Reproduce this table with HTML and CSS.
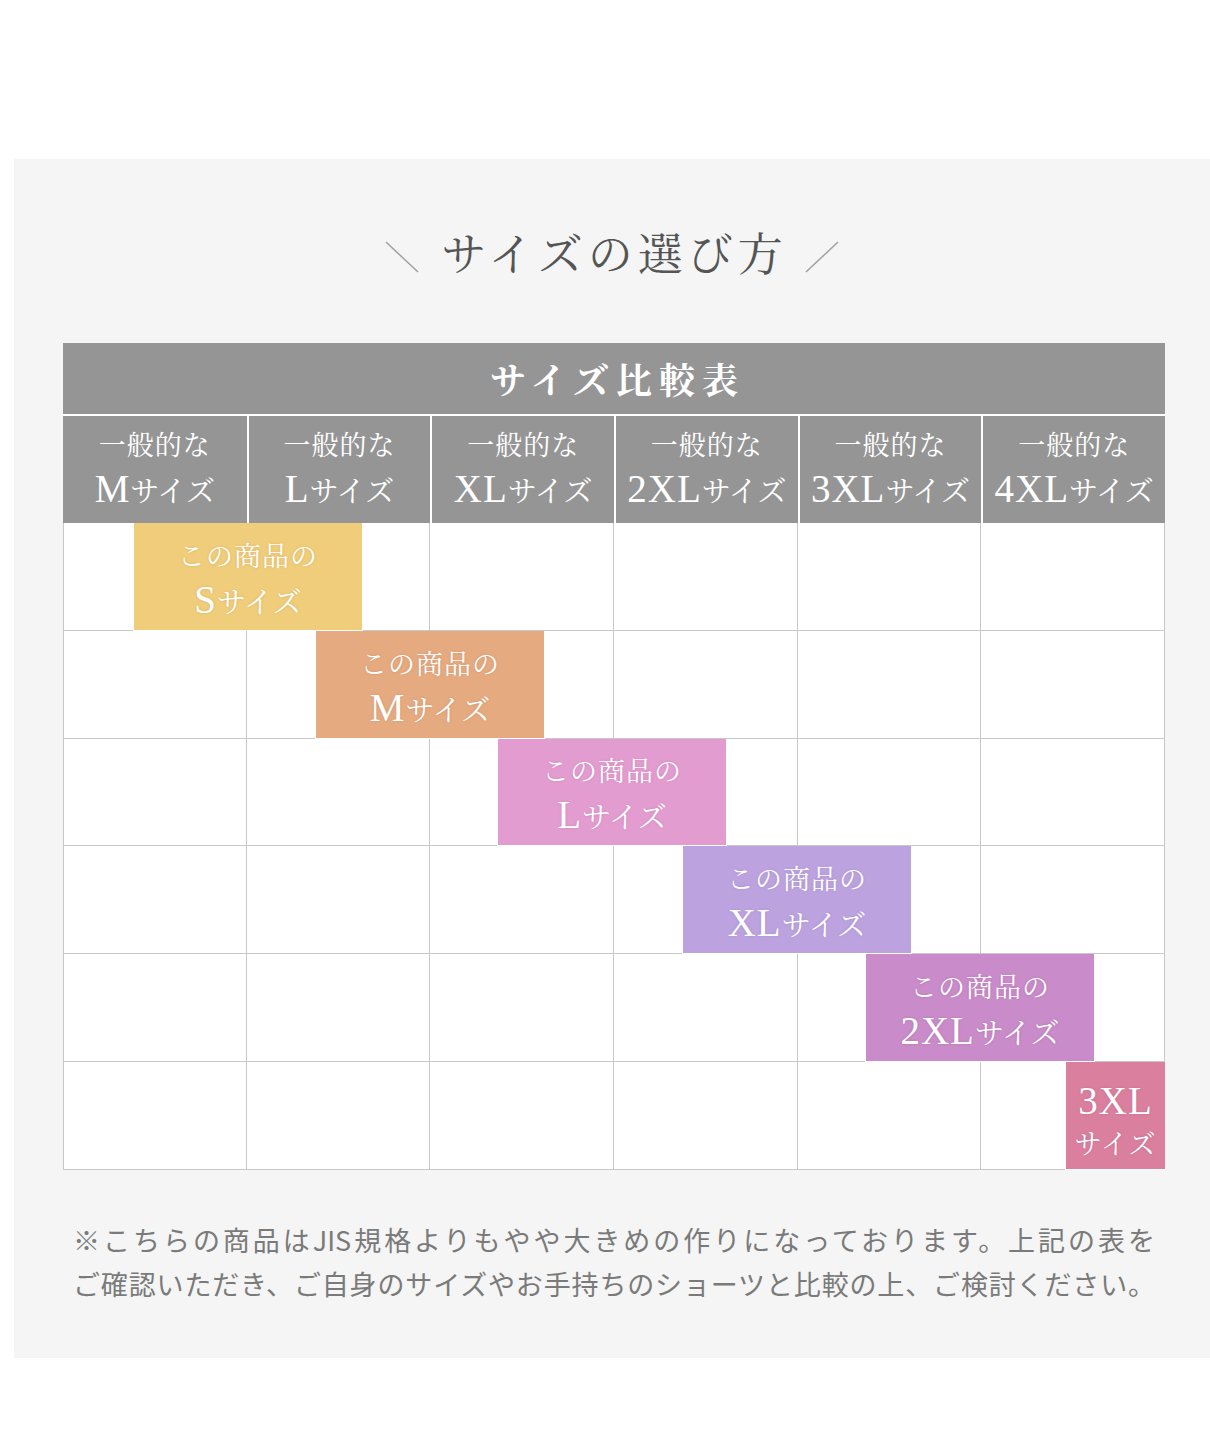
FILE: index.html
```html
<!DOCTYPE html>
<html lang="ja">
<head>
<meta charset="utf-8">
<title>サイズの選び方</title>
<link rel="stylesheet" href="styles.css">
</head>
<body>
<div class="page">
  <section class="panel">
    <h2 class="title">
      <svg class="slash" width="34" height="32" viewBox="0 0 34 32"><line x1="1" y1="1" x2="33" y2="31"/></svg>
      <span class="title-text">サイズの選び方</span>
      <svg class="slash" width="34" height="32" viewBox="0 0 34 32"><line x1="1" y1="31" x2="33" y2="1"/></svg>
    </h2>

    <div class="chart">
      <div class="chart-head">サイズ比較表</div>
      <div class="col-heads">
        <div class="col-head"><span class="l1">一般的な</span><span class="l2"><span class="lat">M</span>サイズ</span></div>
        <div class="col-head"><span class="l1">一般的な</span><span class="l2"><span class="lat">L</span>サイズ</span></div>
        <div class="col-head"><span class="l1">一般的な</span><span class="l2"><span class="lat">XL</span>サイズ</span></div>
        <div class="col-head"><span class="l1">一般的な</span><span class="l2"><span class="lat">2XL</span>サイズ</span></div>
        <div class="col-head"><span class="l1">一般的な</span><span class="l2"><span class="lat">3XL</span>サイズ</span></div>
        <div class="col-head"><span class="l1">一般的な</span><span class="l2"><span class="lat">4XL</span>サイズ</span></div>
      </div>

      <div class="row">
        <div class="cell"></div><div class="cell"></div><div class="cell"></div><div class="cell"></div><div class="cell"></div><div class="cell"></div>
        <div class="bar bar-s"><span class="b1">この商品の</span><span class="b2"><span class="lat">S</span>サイズ</span></div>
      </div>
      <div class="row">
        <div class="cell"></div><div class="cell"></div><div class="cell"></div><div class="cell"></div><div class="cell"></div><div class="cell"></div>
        <div class="bar bar-m"><span class="b1">この商品の</span><span class="b2"><span class="lat">M</span>サイズ</span></div>
      </div>
      <div class="row">
        <div class="cell"></div><div class="cell"></div><div class="cell"></div><div class="cell"></div><div class="cell"></div><div class="cell"></div>
        <div class="bar bar-l"><span class="b1">この商品の</span><span class="b2"><span class="lat">L</span>サイズ</span></div>
      </div>
      <div class="row">
        <div class="cell"></div><div class="cell"></div><div class="cell"></div><div class="cell"></div><div class="cell"></div><div class="cell"></div>
        <div class="bar bar-xl"><span class="b1">この商品の</span><span class="b2"><span class="lat">XL</span>サイズ</span></div>
      </div>
      <div class="row">
        <div class="cell"></div><div class="cell"></div><div class="cell"></div><div class="cell"></div><div class="cell"></div><div class="cell"></div>
        <div class="bar bar-2xl"><span class="b1">この商品の</span><span class="b2"><span class="lat">2XL</span>サイズ</span></div>
      </div>
      <div class="row">
        <div class="cell"></div><div class="cell"></div><div class="cell"></div><div class="cell"></div><div class="cell"></div><div class="cell"></div>
        <div class="bar bar-3xl"><span class="b2"><span class="lat">3XL</span></span><span class="b3">サイズ</span></div>
      </div>
    </div>

    <p class="note">
      <span class="note-line">※こちらの商品はJIS規格よりもやや大きめの作りになっております。上記の表を</span>
      <span class="note-line">ご確認いただき、ご自身のサイズやお手持ちのショーツと比較の上、ご検討ください。</span>
    </p>
  </section>
</div>
</body>
</html>
```

FILE: styles.css
```css
html, body {
  margin: 0;
  padding: 0;
  background: #ffffff;
}

.page {
  padding: 159px 0 94px 14px;
}

.panel {
  background: #f4f5f4;
  padding: 67px 0 52px;
  font-family: "Liberation Serif", "Noto Serif CJK JP", "Noto Sans CJK JP", serif;
}

.title {
  margin: 0;
  height: 60px;
  display: flex;
  align-items: center;
  justify-content: center;
  gap: 22px;
  font-weight: 400;
  font-size: 45px;
  color: #555555;
}

.title-text {
  letter-spacing: 5px;
  margin-right: -5px;
  line-height: 60px;
}

.slash {
  margin-top: 2px;
}

.slash line {
  stroke: #a0a0a0;
  stroke-width: 1.5;
}

.chart {
  width: 1102px;
  margin: 57px 0 0 49px;
  background: #ffffff;
}

.chart-head {
  height: 71px;
  background: #959595;
  color: #ffffff;
  font-weight: 700;
  font-size: 36px;
  letter-spacing: 7px;
  text-indent: 7px;
  display: flex;
  align-items: center;
  justify-content: center;
  border-bottom: 2px solid #ffffff;
}

.col-heads {
  display: grid;
  grid-template-columns: repeat(6, 1fr);
  height: 107px;
}

.col-head {
  background: #959595;
  color: #ffffff;
  display: flex;
  flex-direction: column;
  align-items: center;
  justify-content: center;
  border-left: 2px solid #ffffff;
  padding-top: 2px;
  box-sizing: border-box;
}

.col-head:first-child {
  border-left: none;
}

.l1 {
  font-size: 27px;
  letter-spacing: 1px;
  line-height: 40px;
}

.l2 {
  font-size: 29px;
  line-height: 46px;
  white-space: nowrap;
}

.lat {
  font-family: "Liberation Serif", serif;
  font-size: 39px;
  letter-spacing: 1px;
}

.row {
  position: relative;
  display: grid;
  grid-template-columns: repeat(6, 1fr);
  height: 107.8px;
}

.cell {
  border-right: 1px solid #c8c8c8;
  border-bottom: 1px solid #c8c8c8;
}

.cell:first-child {
  border-left: 1px solid #c8c8c8;
}

.bar {
  position: absolute;
  top: 0;
  bottom: 0;
  width: 230px;
  box-sizing: border-box;
  border: 1px solid #ffffff;
  border-top: none;
  display: flex;
  flex-direction: column;
  align-items: center;
  justify-content: center;
  color: #ffffff;
  text-shadow: 0 0 3px rgba(0, 0, 0, 0.12);
  padding-top: 10px;
}

.b1 {
  font-size: 27px;
  letter-spacing: 1px;
  line-height: 40px;
}

.b2 {
  font-size: 29px;
  line-height: 46px;
  white-space: nowrap;
}

.b3 {
  font-size: 27px;
  letter-spacing: 1px;
  line-height: 36px;
}

.bar-s { left: 70px; background: #f0cd7a; }
.bar-m { left: 252px; background: #e6aa80; }
.bar-l { left: 434px; background: #e39cd0; }
.bar-xl { left: 619px; background: #bca3e0; }
.bar-2xl { left: 802px; background: #c98bc9; }
.bar-3xl { left: 1002px; width: 100px; background: #db7f9f; border-right: none; }

.note {
  width: 1082px;
  margin: 48px 0 0 59px;
  font-family: "Noto Sans CJK JP", sans-serif;
  font-weight: 400;
  font-size: 27px;
  line-height: 44px;
  color: #7a7a7a;
}

.note-line {
  display: block;
  text-align: justify;
  text-align-last: justify;
}
```
